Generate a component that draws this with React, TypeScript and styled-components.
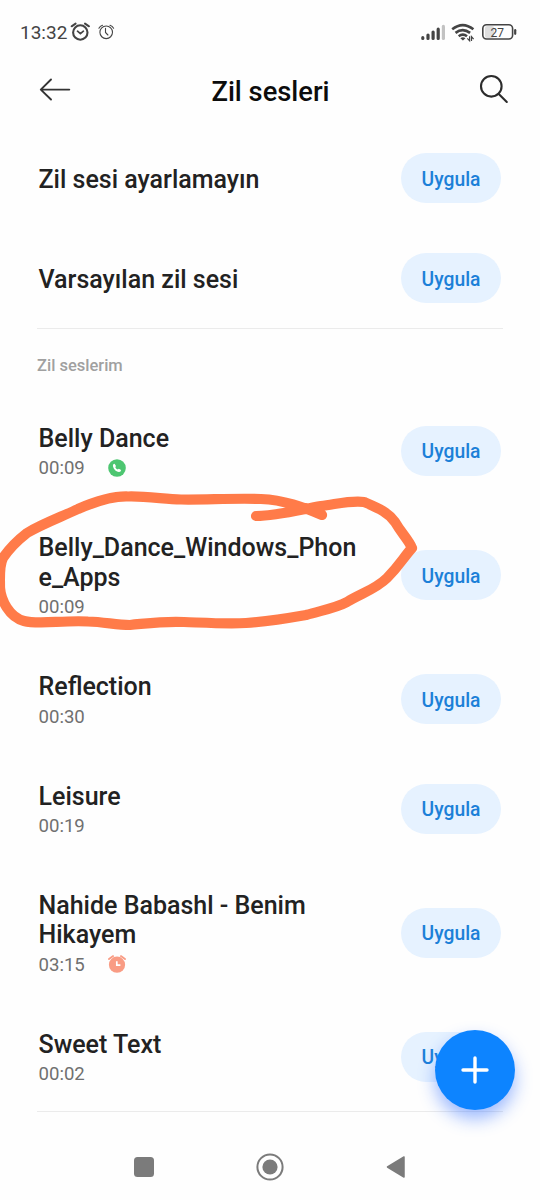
import React from 'react';
import styled, { createGlobalStyle } from 'styled-components';

const GlobalStyle = createGlobalStyle`
  * { box-sizing: border-box; }
  body { margin: 0; background: #fefefe; }
  svg { display: block; flex: none; }
`;

const Screen = styled.div`
  position: relative;
  width: 540px;
  height: 1200px;
  overflow: hidden;
  display: flex;
  flex-direction: column;
  background: #fefefe;
  font-family: Roboto, sans-serif;
`;

const StatusBar = styled.header`
  height: 60px;
  padding: 4px 22px 0 20px;
  display: flex;
  align-items: center;
  color: #444;
`;

const Clock = styled.span`
  font-size: 19px;
  line-height: 24px;
  width: 50px;
  white-space: nowrap;
  padding-top: 1px;
`;

const StatusIcons = styled.div`
  display: flex;
  align-items: center;
  margin-left: auto;
`;

const TitleBar = styled.div`
  height: 68px;
  padding: 0 28px 8px 38px;
  display: flex;
  align-items: center;
  justify-content: space-between;
`;

const PageTitle = styled.h1`
  margin: 0 9px 0 0;
  padding-top: 3px;
  font-size: 27.3px;
  line-height: 32px;
  font-weight: 500;
  color: #0c0c0c;
`;

const List = styled.main`
  padding: 0 37px;
`;

const Row = styled.div<{ $simple?: boolean }>`
  display: flex;
  align-items: center;
  justify-content: space-between;
  ${(p) => (p.$simple ? 'height: 100px;' : 'padding: 28.3px 0 27.1px;')}
  padding-left: 1.5px;
  padding-right: 2px;
`;

const Info = styled.div<{ $simple?: boolean }>`
  width: 330px;
  padding-top: ${(p) => (p.$simple ? '3px' : '0')};
`;

const Name = styled.div`
  font-size: 25px;
  line-height: 29.3px;
  font-weight: 500;
  color: #222;
  white-space: nowrap;
`;

const Meta = styled.div`
  height: 24.8px;
  padding-top: 5.6px;
  display: flex;
  align-items: center;
  gap: 23px;
  font-size: 18.6px;
  line-height: 22px;
  color: #707070;
`;

const Badge = styled.span`
  margin-bottom: 1.5px;
`;

const ApplyButton = styled.button`
  width: 100px;
  height: 50px;
  flex: none;
  padding: 3px 0 0;
  border: 0;
  border-radius: 25px;
  background: #e6f2ff;
  color: #1c80d8;
  font: 500 19.3px/24px Roboto, sans-serif;
`;

const Divider = styled.hr`
  height: 1px;
  margin: 0;
  border: 0;
  background: #ebebeb;
`;

const SectionLabel = styled.h2`
  margin: 0;
  height: 66.6px;
  padding-top: 26px;
  font-size: 16.5px;
  line-height: 22px;
  font-weight: 500;
  color: #a0a0a0;
`;

const AddButton = styled.button`
  position: absolute;
  left: 435px;
  top: 1030px;
  width: 80px;
  height: 80px;
  padding: 0;
  border: 0;
  border-radius: 50%;
  background: #0d84ff;
  box-shadow: 0 9px 17px rgba(50, 110, 255, 0.48);
`;

const NavBar = styled.nav`
  margin-top: auto;
  height: 66px;
  padding: 0 134px;
  display: flex;
  align-items: center;
  justify-content: space-between;
`;

const Scribble = styled.svg`
  position: absolute;
  left: 0;
  top: 480px;
  pointer-events: none;
`;

const CallBadge = () => (
  <svg width="18" height="18" viewBox="0 0 18 18">
    <circle cx="9" cy="9" r="8.8" fill="#4dc671" />
    <path d="M5.3 5.2 6.6 4.8 8 7.1 7.3 8.2Q8.1 9.9 9.8 10.6L10.8 9.8 13.1 11.1Q12.9 13.2 11 13.1C7.6 12.7 5.2 9.7 4.9 6.5Z" fill="#fff" />
  </svg>
);

const AlarmBadge = () => (
  <svg width="18" height="20" viewBox="0 0 18 20">
    <circle cx="9" cy="10.7" r="8.1" fill="#f99c84" />
    <path d="M1 5.1 5.1 2.1M12.9 2.1 17 5.1" stroke="#f99c84" strokeWidth="1.8" strokeLinecap="round" />
    <path d="M8.8 7.3v3.9h3.6" fill="none" stroke="#fff" strokeWidth="1.7" />
  </svg>
);

type Tone = { lines: string[]; time?: string; badge?: React.ReactNode };

const presets: Tone[] = [{ lines: ['Zil sesi ayarlamayın'] }, { lines: ['Varsayılan zil sesi'] }];

const tones: Tone[] = [
  { lines: ['Belly Dance'], time: '00:09', badge: <CallBadge /> },
  { lines: ['Belly_Dance_Windows_Phon', 'e_Apps'], time: '00:09' },
  { lines: ['Reflection'], time: '00:30' },
  { lines: ['Leisure'], time: '00:19' },
  { lines: ['Nahide Babashl - Benim', 'Hikayem'], time: '03:15', badge: <AlarmBadge /> },
  { lines: ['Sweet Text'], time: '00:02' },
];

const ToneRow = ({ lines, time, badge }: Tone) => (
  <Row $simple={!time}>
    <Info $simple={!time}>
      {lines.map((line) => (
        <Name key={line}>{line}</Name>
      ))}
      {time && (
        <Meta>
          <span>{time}</span>
          {badge && <Badge>{badge}</Badge>}
        </Meta>
      )}
    </Info>
    <ApplyButton>Uygula</ApplyButton>
  </Row>
);

export default function App() {
  return (
    <Screen>
      <GlobalStyle />
      <StatusBar>
        <Clock>13:32</Clock>
        <svg width="50" height="24" viewBox="70 20 50 24" fill="none" stroke="#444" strokeLinecap="round">
          <circle cx="80.3" cy="32.5" r="7.2" strokeWidth="2.1" />
          <path d="m77.5 31.2 2.9 2.5 3-2.5" strokeWidth="1.7" />
          <path d="m71.6 26.3 4-2.7M85 23.6l4 2.7" strokeWidth="2" />
          <circle cx="106.2" cy="32.3" r="6.3" strokeWidth="1.1" />
          <path d="M105.5 28.4v4.1l2.4 2.5M98.9 28.3q1.2-2.3 3.6-3.1M110 25.2q2.4.8 3.6 3.1" strokeWidth="1.1" />
        </svg>
        <StatusIcons>
          <svg width="98" height="24" viewBox="420 20 98 24">
            <g strokeWidth="3.2" strokeLinecap="round" stroke="#444">
              <path d="M422.8 37.7v.7M428 35v3.4M433.1 32v6.4M438.2 29.2v9.2" />
              <path d="M443.4 26.4v12" stroke="#c2c2c2" />
            </g>
            <g fill="none" stroke="#444" strokeWidth="2.6">
              <path d="M452.2 29.3q10.5-8.4 21.2 0" />
              <path d="M455.5 32.9q7.2-5.6 14.6 0" />
              <path d="M458.7 36.3q4.2-3.2 8.3 0" />
            </g>
            <path d="M460.3 38.2q2.6-1.9 5.2 0L462.9 40.5Z" fill="#444" />
            <path d="M469.6 36.3v4.4l-2.3-2.4M471.5 41v-4.4l2.1 2.5" fill="none" stroke="#444" strokeWidth="1.2" />
            <rect x="485" y="26" width="9" height="12" rx="2" fill="#dfdfdf" />
            <rect x="482.8" y="24.8" width="29.8" height="14.2" rx="3.8" fill="none" stroke="#444" strokeWidth="1.6" />
            <path d="M515.2 30.2v3.6" stroke="#444" strokeWidth="2.2" strokeLinecap="round" />
            <text x="497.3" y="36.5" textAnchor="middle" fontFamily="Roboto, sans-serif" fontSize="12" fill="#444">27</text>
          </svg>
        </StatusIcons>
      </StatusBar>
      <TitleBar>
        <svg width="34" height="30" viewBox="38 75 34 30" fill="none" stroke="#333" strokeWidth="1.9" strokeLinecap="round" strokeLinejoin="round">
          <path d="M69.3 89.6H40.8M51 79.5 40.8 89.6 51 99.5" />
        </svg>
        <PageTitle>Zil sesleri</PageTitle>
        <svg width="34" height="34" viewBox="478 73 34 34" fill="none" stroke="#2c2c2c" strokeWidth="2.1" strokeLinecap="round">
          <circle cx="491.3" cy="86.3" r="10.3" />
          <path d="m499 94.2 7.8 7.8" />
        </svg>
      </TitleBar>
      <List>
        {presets.map((t) => (
          <ToneRow key={t.lines[0]} {...t} />
        ))}
        <Divider />
        <SectionLabel>Zil seslerim</SectionLabel>
        {tones.map((t) => (
          <ToneRow key={t.lines[0]} {...t} />
        ))}
        <Divider />
      </List>
      <NavBar>
        <svg width="20" height="20" viewBox="0 0 20 20">
          <rect width="20" height="20" rx="3.5" fill="#7b7b7b" />
        </svg>
        <svg width="28" height="28" viewBox="0 0 28 28">
          <circle cx="14" cy="14" r="12.6" fill="none" stroke="#7b7b7b" strokeWidth="2" />
          <circle cx="14" cy="14" r="7.6" fill="#7b7b7b" />
        </svg>
        <svg width="20" height="24" viewBox="0 0 20 24">
          <path d="M1.5 12 18 2v20Z" fill="#7b7b7b" stroke="#7b7b7b" strokeWidth="1.5" strokeLinejoin="round" />
        </svg>
      </NavBar>
      <Scribble width="430" height="160" viewBox="0 0 430 160" fill="none" stroke="#ff7b49" strokeWidth="10.2" strokeLinecap="round" strokeLinejoin="round">
        <path d="M322 35 C303 27 284 20 261 19 C232 18 205 20 181 19.5 C164 19 146 16 128 16.5 C112 16 92 23 78 29 C61 37 42 44 27 53 C18 60 9 69 3 78 C-1 86 0 95 0 108 C1 120 9 137 24 141 C39 145 62 140 88 141.5 C105 142 116 145 130 145 C151 143 164 141 184 142 C211 143 228 144 246 143 C273 141 289 138 306 135 C323 130 336 128 347 122 C362 113 376 109 387 98 C400 85 403 78 412 68 C408 59 402 54 395 42 C388 32 378 28 364 22 C352 20 337 24 321 26 C299 30 277 36 256 36" />
      </Scribble>
      <AddButton aria-label="+">
        <svg width="80" height="80" viewBox="0 0 80 80" stroke="#fff" strokeWidth="3.4" strokeLinecap="round">
          <path d="M40 28v24M28 40h24" />
        </svg>
      </AddButton>
    </Screen>
  );
}
